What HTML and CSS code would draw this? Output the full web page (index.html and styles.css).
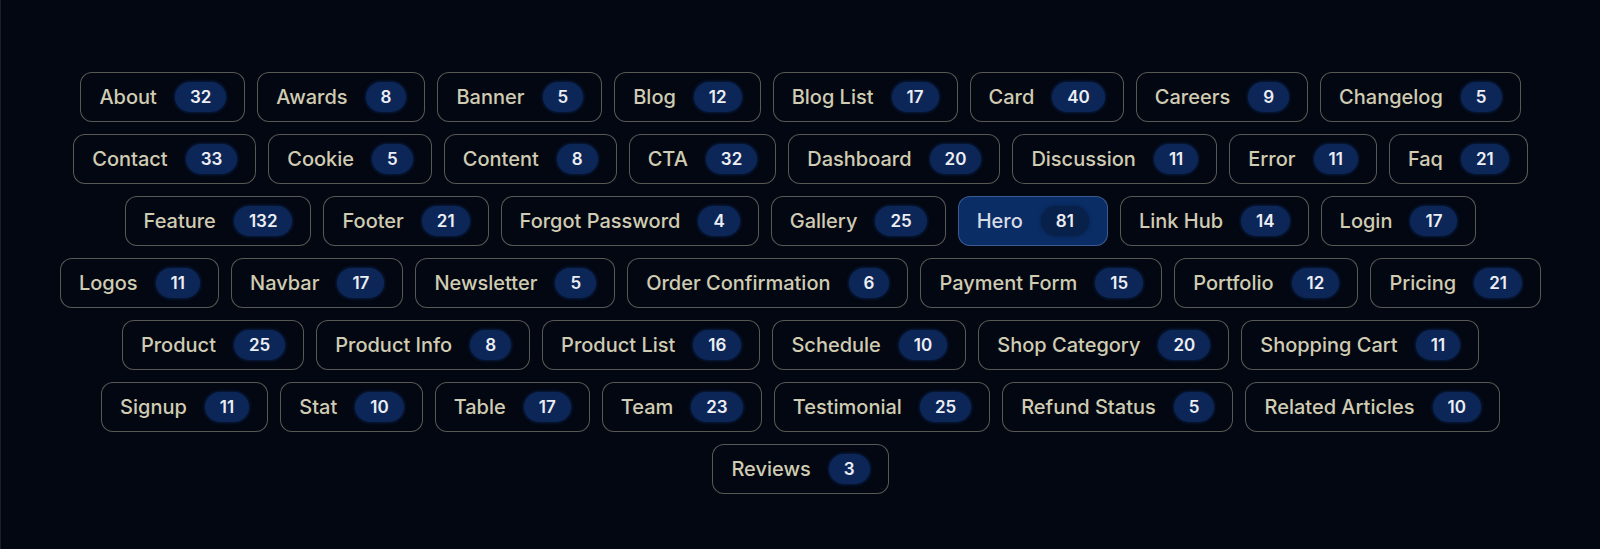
FILE: index.html
```html
<!DOCTYPE html>
<html lang="en">
<head>
<meta charset="utf-8">
<title>Categories</title>
<link rel="stylesheet" href="styles.css">
</head>
<body>
<main class="page">
  <nav class="tags">
    <a class="tag" href="#">About <span class="count">32</span></a>
    <a class="tag" href="#">Awards <span class="count">8</span></a>
    <a class="tag" href="#">Banner <span class="count">5</span></a>
    <a class="tag" href="#">Blog <span class="count">12</span></a>
    <a class="tag" href="#">Blog List <span class="count">17</span></a>
    <a class="tag" href="#">Card <span class="count">40</span></a>
    <a class="tag" href="#">Careers <span class="count">9</span></a>
    <a class="tag" href="#">Changelog <span class="count">5</span></a>
    <a class="tag" href="#">Contact <span class="count">33</span></a>
    <a class="tag" href="#">Cookie <span class="count">5</span></a>
    <a class="tag" href="#">Content <span class="count">8</span></a>
    <a class="tag" href="#">CTA <span class="count">32</span></a>
    <a class="tag" href="#">Dashboard <span class="count">20</span></a>
    <a class="tag" href="#">Discussion <span class="count">11</span></a>
    <a class="tag" href="#">Error <span class="count">11</span></a>
    <a class="tag" href="#">Faq <span class="count">21</span></a>
    <a class="tag" href="#">Feature <span class="count">132</span></a>
    <a class="tag" href="#">Footer <span class="count">21</span></a>
    <a class="tag" href="#">Forgot Password <span class="count">4</span></a>
    <a class="tag" href="#">Gallery <span class="count">25</span></a>
    <a class="tag active" href="#">Hero <span class="count">81</span></a>
    <a class="tag" href="#">Link Hub <span class="count">14</span></a>
    <a class="tag" href="#">Login <span class="count">17</span></a>
    <a class="tag" href="#">Logos <span class="count">11</span></a>
    <a class="tag" href="#">Navbar <span class="count">17</span></a>
    <a class="tag" href="#">Newsletter <span class="count">5</span></a>
    <a class="tag" href="#">Order Confirmation <span class="count">6</span></a>
    <a class="tag" href="#">Payment Form <span class="count">15</span></a>
    <a class="tag" href="#">Portfolio <span class="count">12</span></a>
    <a class="tag" href="#">Pricing <span class="count">21</span></a>
    <a class="tag" href="#">Product <span class="count">25</span></a>
    <a class="tag" href="#">Product Info <span class="count">8</span></a>
    <a class="tag" href="#">Product List <span class="count">16</span></a>
    <a class="tag" href="#">Schedule <span class="count">10</span></a>
    <a class="tag" href="#">Shop Category <span class="count">20</span></a>
    <a class="tag" href="#">Shopping Cart <span class="count">11</span></a>
    <a class="tag" href="#">Signup <span class="count">11</span></a>
    <a class="tag" href="#">Stat <span class="count">10</span></a>
    <a class="tag" href="#">Table <span class="count">17</span></a>
    <a class="tag" href="#">Team <span class="count">23</span></a>
    <a class="tag" href="#">Testimonial <span class="count">25</span></a>
    <a class="tag" href="#">Refund Status <span class="count">5</span></a>
    <a class="tag" href="#">Related Articles <span class="count">10</span></a>
    <a class="tag" href="#">Reviews <span class="count">3</span></a>
  </nav>
</main>
</body>
</html>
```
FILE: styles.css
```css
* {
  box-sizing: border-box;
}

html,
body {
  margin: 0;
  height: 100%;
  background: #030712;
}

body {
  border-left: 1px solid #1b1f2b;
  font-family: Inter, "Noto Sans", "Liberation Sans", sans-serif;
}

.page {
  padding: 72px 48px 0;
}

.tags {
  display: flex;
  flex-wrap: wrap;
  justify-content: center;
  gap: 12px;
}

.tag {
  display: flex;
  align-items: center;
  gap: 18px;
  height: 50px;
  padding: 0 18px;
  border: 1px solid rgba(208, 203, 176, 0.42);
  border-radius: 12px;
  background: #030712;
  color: #d0ccb3;
  font-size: 20px;
  font-weight: 500;
  line-height: 1;
  text-decoration: none;
  white-space: nowrap;
}

.count {
  display: flex;
  align-items: center;
  justify-content: center;
  height: 30px;
  padding: 0 15px;
  border-radius: 999px;
  background: #0c2757;
  box-shadow: 0 0 3px 1px rgba(12, 39, 87, 0.7);
  color: #eceef4;
  font-size: 17px;
  font-weight: 600;
}

.tag.active {
  background: #0a2d66;
  border-color: rgba(120, 150, 200, 0.45);
  color: #d8dce4;
}

.tag.active .count {
  background: #08214a;
  box-shadow: 0 0 3px 1px rgba(8, 33, 74, 0.7);
}
```
